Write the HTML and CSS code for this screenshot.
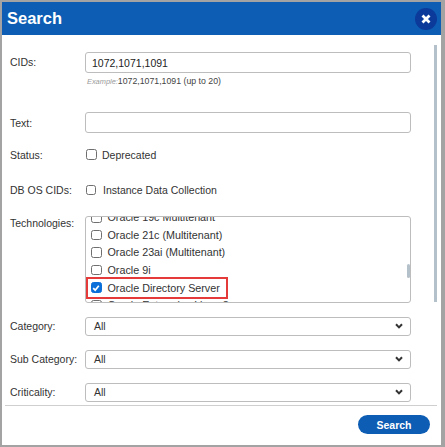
FILE: index.html
```html
<!DOCTYPE html>
<html>
<head>
<meta charset="utf-8">
<title>Search</title>
<link rel="stylesheet" href="styles.css">
</head>
<body>
<div class="dialog">
  <div class="header">
    <span class="title">Search</span>
    <button class="close" aria-label="Close">
      <svg width="10" height="10" viewBox="0 0 10 10"><path d="M1.5 1.5 L8.5 8.5 M8.5 1.5 L1.5 8.5" stroke="#fff" stroke-width="2.8" fill="none"/></svg>
    </button>
  </div>
  <div class="body">
    <div class="content">
      <div class="row row-top">
        <label class="label label-input">CIDs:</label>
        <div class="field">
          <input class="text-input" type="text" value="1072,1071,1091">
          <div class="hint"><span class="hint-prefix">Example:</span>1072,1071,1091 (up to 20)</div>
        </div>
      </div>
      <div class="row row-text">
        <label class="label">Text:</label>
        <input class="text-input" type="text" value="">
      </div>
      <div class="row row-check row-status">
        <label class="label">Status:</label>
        <div class="check"><span class="cb"></span><span>Deprecated</span></div>
      </div>
      <div class="row row-check">
        <label class="label">DB OS CIDs:</label>
        <div class="check check-sm"><span class="cb cb-sm"></span><span>Instance Data Collection</span></div>
      </div>
      <div class="row row-tech">
        <label class="label label-tech">Technologies:</label>
        <div class="listbox">
          <div class="list-scroll">
            <div class="item"><span class="item-inner"><span class="cb cb-item"></span><span>Oracle 19c Multitenant</span></span></div>
            <div class="item"><span class="item-inner"><span class="cb cb-item"></span><span>Oracle 21c (Multitenant)</span></span></div>
            <div class="item"><span class="item-inner"><span class="cb cb-item"></span><span>Oracle 23ai (Multitenant)</span></span></div>
            <div class="item"><span class="item-inner"><span class="cb cb-item"></span><span>Oracle 9i</span></span></div>
            <div class="item"><span class="item-inner highlight"><span class="cb cb-item cb-checked"><svg width="8" height="8" viewBox="0 0 8 8"><path d="M1.2 4.2 L3.2 6.2 L6.8 1.8" stroke="#fff" stroke-width="1.7" fill="none"/></svg></span><span>Oracle Directory Server</span></span></div>
            <div class="item"><span class="item-inner"><span class="cb cb-item"></span><span>Oracle Enterprise Linux 8</span></span></div>
          </div>
          <div class="list-thumb"></div>
        </div>
      </div>
      <div class="row row-select">
        <label class="label">Category:</label>
        <div class="select"><span>All</span><svg class="chev" width="8" height="6" viewBox="0 0 8 6"><path d="M1 1.2 L4 4.4 L7 1.2" stroke="#333" stroke-width="2" fill="none"/></svg></div>
      </div>
      <div class="row row-select">
        <label class="label">Sub Category:</label>
        <div class="select"><span>All</span><svg class="chev" width="8" height="6" viewBox="0 0 8 6"><path d="M1 1.2 L4 4.4 L7 1.2" stroke="#333" stroke-width="2" fill="none"/></svg></div>
      </div>
      <div class="row row-select">
        <label class="label">Criticality:</label>
        <div class="select"><span>All</span><svg class="chev" width="8" height="6" viewBox="0 0 8 6"><path d="M1 1.2 L4 4.4 L7 1.2" stroke="#333" stroke-width="2" fill="none"/></svg></div>
      </div>
    </div>
    <div class="body-thumb"></div>
  </div>
  <div class="footer">
    <button class="search-btn">Search</button>
  </div>
</div>
</body>
</html>
```
FILE: styles.css
```css
html, body {
  margin: 0;
  padding: 0;
  background: #a3a3a3;
  font-family: "Liberation Sans", Arial, sans-serif;
}
.dialog {
  width: 439px;
  height: 443px;
  margin: 2px 0 0 2px;
  background: #fff;
  display: flex;
  flex-direction: column;
  overflow: hidden;
}
.header {
  flex: none;
  height: 33px;
  background: #0c5db3;
  display: flex;
  align-items: center;
  justify-content: space-between;
  padding: 0 4px 0 5px;
}
.title {
  color: #fff;
  font-weight: bold;
  font-size: 16.5px;
}
.close {
  width: 22px;
  height: 22px;
  border-radius: 50%;
  border: 0;
  padding: 0;
  background: #0b3a9a;
  display: flex;
  align-items: center;
  justify-content: center;
}
.body {
  flex: 1;
  min-height: 0;
  display: flex;
}
.content {
  flex: 1;
  padding: 17px 23px 0 8px;
}
.body-thumb {
  flex: none;
  width: 3px;
  height: 257px;
  margin: 10px 4px 0 0;
  background: #b5c1ca;
}
.row {
  display: grid;
  grid-template-columns: 75px 326px;
  align-items: center;
  margin-top: 14px;
}
.row-top {
  margin-top: 0;
  align-items: start;
}
.row-text { margin-top: 25px; }
.row-status { margin-top: 11px; }
.row-check { height: 21px; }
.row-tech {
  margin-top: 15.5px;
  align-items: start;
}
.label {
  font-size: 10.5px;
  color: #333;
  white-space: nowrap;
}
.label-input { line-height: 21px; }
.label-tech {
  line-height: 13px;
  padding-top: 1.5px;
}
.text-input {
  box-sizing: border-box;
  width: 326px;
  height: 21px;
  margin: 0;
  border: 1px solid #bdbdbd;
  border-radius: 3px;
  padding: 0 6px;
  font-family: "Liberation Sans", Arial, sans-serif;
  font-size: 10.5px;
  color: #222;
  outline: none;
}
.hint {
  margin-top: 3px;
  line-height: 11px;
  font-size: 8.75px;
  color: #444;
  padding-left: 2px;
  white-space: nowrap;
}
.hint-prefix {
  font-style: italic;
  font-size: 7.4px;
  color: #999;
}
.check {
  display: flex;
  align-items: center;
  gap: 5px;
  margin-left: 1px;
  font-size: 10.5px;
  color: #333;
}
.check-sm { gap: 7px; }
.cb {
  box-sizing: border-box;
  width: 11px;
  height: 11px;
  border: 1px solid #6f6f6f;
  border-radius: 2.5px;
  background: #fff;
  flex: none;
  display: flex;
  align-items: center;
  justify-content: center;
}
.cb-sm {
  width: 10px;
  height: 10px;
}
.cb-item {
  width: 10.5px;
  height: 10.5px;
}
.cb-checked {
  background: #0b6fd9;
  border-color: #0b6fd9;
}
.listbox {
  position: relative;
  box-sizing: border-box;
  width: 326px;
  height: 87px;
  border: 1px solid #bdbdbd;
  border-radius: 3px;
  overflow: hidden;
}
.list-scroll {
  margin-top: -8px;
}
.item {
  height: 17.6px;
  display: flex;
  align-items: center;
  padding-left: 5px;
  font-size: 10.75px;
  color: #333;
  white-space: nowrap;
}
.item-inner {
  display: inline-flex;
  align-items: center;
  gap: 6px;
  line-height: 12px;
}
.highlight {
  position: relative;
}
.highlight::after {
  content: "";
  position: absolute;
  left: -5px;
  right: -8px;
  top: -5px;
  bottom: -5px;
  border: 2px solid #e53a3a;
}
.list-thumb {
  position: absolute;
  right: 0;
  top: 47px;
  width: 3px;
  height: 14px;
  border-radius: 1.5px;
  background: #b5c1ca;
}
.select {
  box-sizing: border-box;
  width: 326px;
  height: 19px;
  border: 1px solid #bdbdbd;
  border-radius: 3px;
  padding: 0 7px 0 8px;
  display: flex;
  align-items: center;
  justify-content: space-between;
  font-size: 10.5px;
  color: #333;
}
.footer {
  flex: none;
  border-top: 1px solid #cfcfcf;
  margin: 0 4px 0 3px;
  padding: 9px 7px 11px 0;
  display: flex;
  justify-content: flex-end;
}
.search-btn {
  width: 72px;
  height: 19px;
  border: 0;
  border-radius: 10px;
  padding: 0;
  background: #0c5db3;
  color: #fff;
  font-family: "Liberation Sans", Arial, sans-serif;
  font-weight: bold;
  font-size: 10.5px;
}
```
